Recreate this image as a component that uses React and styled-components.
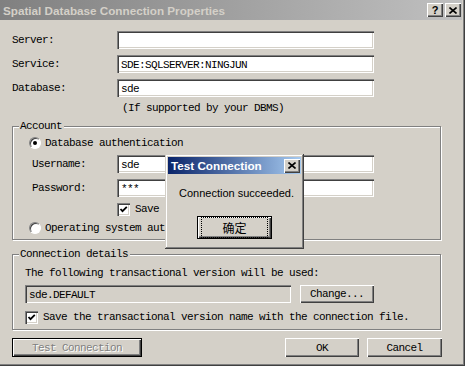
import React from 'react';
import styled, { createGlobalStyle } from 'styled-components';

const mono = `"Liberation Mono", "DejaVu Sans Mono", monospace`;
const sans = `"Liberation Sans", Arial, sans-serif`;

const GlobalStyle = createGlobalStyle`
  html, body {
    margin: 0;
    padding: 0;
    background: #d4d0c8;
  }
  body {
    width: 465px;
    height: 366px;
    overflow: hidden;
  }
`;

// 窗口外框
const Window = styled.div`
  position: relative;
  width: 465px;
  height: 366px;
  box-sizing: border-box;
  padding: 0 3px 4px 0;
  background: #d4d0c8;
  box-shadow: inset -1px -1px 0 #404040, inset -2px -2px 0 #808080;
  font-family: ${mono};
  font-size: 11px;
  letter-spacing: -0.6px;
  color: #000;
`;

const TitleBar = styled.div`
  display: flex;
  align-items: center;
  justify-content: space-between;
  padding: 0 1px 0 3px;
  background: ${(p) => (p.$active ? 'linear-gradient(to right, #0a246a, #a6caf0)' : 'linear-gradient(to right, #808080, #c0c0c0)')};
  height: ${(p) => p.$height || 20}px;
`;

const TitleText = styled.span`
  font-family: ${sans};
  font-weight: bold;
  font-size: 11.7px;
  letter-spacing: 0;
  color: ${(p) => (p.$active ? '#ffffff' : '#d4d0c8')};
  white-space: nowrap;
`;

const TitleButtons = styled.div`
  display: flex;
  gap: 2px;
`;

const CaptionButton = styled.div`
  width: 16px;
  height: 14px;
  display: flex;
  align-items: center;
  justify-content: center;
  background: #d4d0c8;
  box-shadow: inset 1px 1px 0 #ffffff, inset -1px -1px 0 #404040, inset -2px -2px 0 #808080;
  font-family: ${sans};
  font-weight: bold;
  font-size: 11px;
  letter-spacing: 0;
  line-height: 14px;
`;

const Body = styled.div`
  padding: 11px 0 0 12px;
`;

const Fields = styled.div`
  display: flex;
  flex-direction: column;
  gap: 6px;
`;

const FieldRow = styled.div`
  display: grid;
  grid-template-columns: ${(p) => p.$labelWidth}px ${(p) => p.$inputWidth}px;
  align-items: center;
  height: 18px;
  margin-top: ${(p) => p.$top || 0}px;
  padding-left: ${(p) => p.$indent || 0}px;
`;

const Label = styled.span`
  white-space: nowrap;
`;

const TextBox = styled.div`
  width: ${(p) => (p.$width ? `${p.$width}px` : 'auto')};
  height: 18px;
  box-sizing: border-box;
  display: flex;
  align-items: center;
  padding: 1px 0 0 4px;
  background: ${(p) => (p.$disabled ? '#d4d0c8' : '#ffffff')};
  box-shadow: inset 1px 1px 0 #808080, inset 2px 2px 0 #404040, inset -1px -1px 0 #ffffff,
    inset -2px -2px 0 #d4d0c8;
  white-space: nowrap;
  overflow: hidden;
`;

const Note = styled.div`
  margin: 5px 0 0 110px;
  line-height: 12px;
`;

const Group = styled.div`
  position: relative;
  width: 429px;
  height: ${(p) => p.$height}px;
  box-sizing: border-box;
  margin-top: ${(p) => p.$top}px;
  padding: ${(p) => p.$pad};
  border: 1px solid #808080;
  box-shadow: 1px 1px 0 #ffffff, inset 1px 1px 0 #ffffff;
`;

const Legend = styled.span`
  position: absolute;
  top: -7px;
  left: 6px;
  padding: 0 2px 0 1px;
  line-height: 12px;
  background: #d4d0c8;
`;

const OptionRow = styled.div`
  display: flex;
  align-items: center;
  gap: ${(p) => p.$gap || 4}px;
  height: 14px;
  margin-top: ${(p) => p.$top || 0}px;
  margin-left: ${(p) => p.$indent || 0}px;
  white-space: nowrap;
`;

const Radio = styled.span`
  width: 12px;
  height: 12px;
  box-sizing: border-box;
  border-radius: 50%;
  border: 1px solid;
  border-color: #808080 #ffffff #ffffff #808080;
  box-shadow: inset 1px 1px 0 #404040;
  background: #ffffff;
  display: flex;
  align-items: center;
  justify-content: center;

  &::after {
    content: '';
    width: 4px;
    height: 4px;
    border-radius: 50%;
    background: ${(p) => (p.$checked ? '#000' : 'transparent')};
  }
`;

const CheckBox = styled.span`
  width: 13px;
  height: 13px;
  box-sizing: border-box;
  background: #ffffff;
  box-shadow: inset 1px 1px 0 #808080, inset 2px 2px 0 #404040, inset -1px -1px 0 #ffffff,
    inset -2px -2px 0 #d4d0c8;
  display: flex;
  align-items: center;
  justify-content: center;
`;

const VersionRow = styled.div`
  display: flex;
  gap: 9px;
  margin-top: 6px;
`;

const Button = styled.div`
  width: ${(p) => p.$width}px;
  height: ${(p) => p.$height || 19}px;
  box-sizing: border-box;
  display: flex;
  align-items: center;
  justify-content: center;
  background: #d4d0c8;
  border: ${(p) => (p.$default ? '1px solid #000' : 'none')};
  box-shadow: inset 1px 1px 0 #ffffff, inset -1px -1px 0 #404040, inset -2px -2px 0 #808080;
  color: ${(p) => (p.$disabled ? '#808080' : '#000')};
  text-shadow: ${(p) => (p.$disabled ? '1px 1px 0 #ffffff' : 'none')};
  white-space: nowrap;
`;

const ButtonBar = styled.div`
  display: flex;
  align-items: center;
  width: 430px;
  margin-top: 8px;
  gap: 8px;
`;

const Spacer = styled.div`
  flex: 1;
`;

// 弹出的测试连接对话框
const Popup = styled.div`
  position: absolute;
  left: 165px;
  top: 154px;
  width: 139px;
  height: 95px;
  box-sizing: border-box;
  padding: 3px;
  background: #d4d0c8;
  box-shadow: inset -1px -1px 0 #404040, inset 1px 1px 0 #d4d0c8, inset -2px -2px 0 #808080,
    inset 2px 2px 0 #ffffff;
`;

const Message = styled.div`
  margin-top: 13px;
  text-align: center;
  font-family: ${sans};
  font-size: 11px;
  letter-spacing: 0;
  line-height: 13px;
  padding-left: 4px;
`;

const OkWrap = styled.div`
  display: flex;
  justify-content: center;
  margin-top: 16px;
`;

const FocusRing = styled.span`
  display: flex;
  align-items: center;
  justify-content: center;
  width: 100%;
  height: 100%;
  box-sizing: border-box;
  margin: 3px;
  border: 1px dotted #000;
  font-family: "Noto Sans CJK SC", sans-serif;
  font-size: 12px;
  letter-spacing: 0;
`;

const CloseGlyph = () => (
  <svg width="8" height="7" viewBox="0 0 8 7">
    <path d="M0.5 0.5 L7.5 6.5 M7.5 0.5 L0.5 6.5" stroke="#000" strokeWidth="1.6" />
  </svg>
);

const Check = () => (
  <svg width="9" height="9" viewBox="0 0 9 9">
    <path d="M1.5 4 L3.5 6.2 L7.8 1.8" fill="none" stroke="#000" strokeWidth="1.8" />
  </svg>
);

const App = () => {
  return (
    <>
      <GlobalStyle />
      <Window>
        <TitleBar>
          <TitleText>Spatial Database Connection Properties</TitleText>
          <TitleButtons>
            <CaptionButton>?</CaptionButton>
            <CaptionButton>
              <CloseGlyph />
            </CaptionButton>
          </TitleButtons>
        </TitleBar>

        <Body>
          <Fields>
            <FieldRow $labelWidth={105} $inputWidth={257}>
              <Label>Server:</Label>
              <TextBox />
            </FieldRow>
            <FieldRow $labelWidth={105} $inputWidth={257}>
              <Label>Service:</Label>
              <TextBox>SDE:SQLSERVER:NINGJUN</TextBox>
            </FieldRow>
            <FieldRow $labelWidth={105} $inputWidth={257}>
              <Label>Database:</Label>
              <TextBox>sde</TextBox>
            </FieldRow>
          </Fields>
          <Note>(If supported by your DBMS)</Note>

          <Group $top={12} $height={114} $pad="9px 0 0 16px">
            <Legend>Account</Legend>
            <OptionRow>
              <Radio $checked />
              Database authentication
            </OptionRow>
            <FieldRow $labelWidth={85} $inputWidth={257} $top={5} $indent={3}>
              <Label>Username:</Label>
              <TextBox>sde</TextBox>
            </FieldRow>
            <FieldRow $labelWidth={85} $inputWidth={257} $top={6} $indent={3}>
              <Label>Password:</Label>
              <TextBox>***</TextBox>
            </FieldRow>
            <OptionRow $top={5} $indent={88} $gap={5}>
              <CheckBox>
                <Check />
              </CheckBox>
              Save password
            </OptionRow>
            <OptionRow $top={5}>
              <Radio />
              Operating system authentication
            </OptionRow>
          </Group>

          <Group $top={14} $height={76} $pad="12px 0 0 12px">
            <Legend>Connection details</Legend>
            <Label>The following transactional version will be used:</Label>
            <VersionRow>
              <TextBox $disabled $width={266}>sde.DEFAULT</TextBox>
              <Button $width={74} $height={18}>Change...</Button>
            </VersionRow>
            <OptionRow $top={7} $gap={5}>
              <CheckBox>
                <Check />
              </CheckBox>
              Save the transactional version name with the connection file.
            </OptionRow>
          </Group>

          <ButtonBar>
            <Button $width={130} $default $disabled>Test Connection</Button>
            <Spacer />
            <Button $width={74}>OK</Button>
            <Button $width={75}>Cancel</Button>
          </ButtonBar>
        </Body>

        <Popup>
          <TitleBar $active $height={17}>
            <TitleText $active>Test Connection</TitleText>
            <CaptionButton>
              <CloseGlyph />
            </CaptionButton>
          </TitleBar>
          <Message>Connection succeeded.</Message>
          <OkWrap>
            <Button $width={75} $height={23} $default>
              <FocusRing>确定</FocusRing>
            </Button>
          </OkWrap>
        </Popup>
      </Window>
    </>
  );
};

export default App;
